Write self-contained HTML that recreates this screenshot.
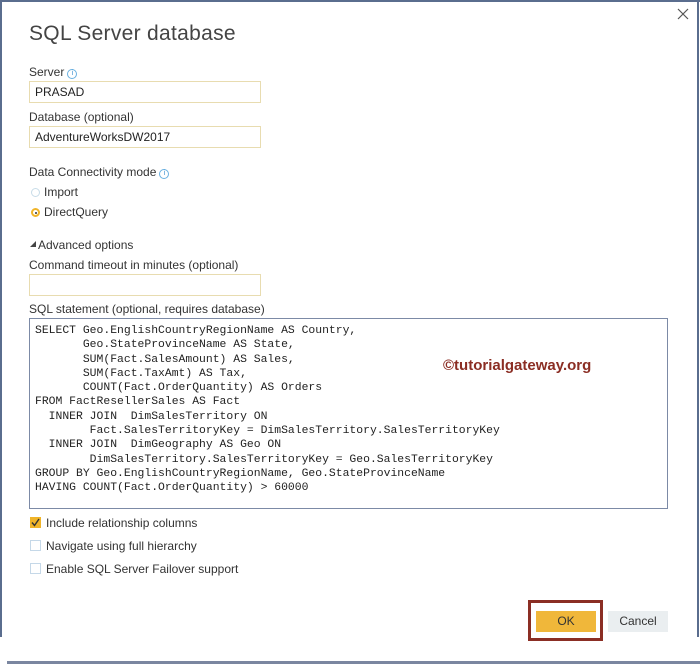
<!DOCTYPE html>
<html><head><meta charset="utf-8">
<style>
*{margin:0;padding:0;box-sizing:border-box}
html,body{width:700px;height:664px;background:#fff;overflow:hidden}
body{position:relative;font-family:"Liberation Sans",sans-serif;color:#333;font-size:12px}
.a{position:absolute;white-space:nowrap}
.lbl{font-size:12px;color:#333}
.inp{position:absolute;border:1px solid #e8dcb0;background:#fff;height:22px;font-size:12px;color:#222;padding:3px 0 0 5px}
.info{display:inline-block;width:10px;height:10px;border:1px solid #6ab0e0;border-radius:50%;font-size:7px;color:#3a8fd0;text-align:center;line-height:8px;vertical-align:1px;margin-left:3px}
.cb{position:absolute;width:11px;height:11px;border:1px solid #c5d8e8;background:#fff}
pre{font-family:"Liberation Mono",monospace;font-size:11.4px;line-height:14.3px;color:#222}
</style></head><body>
<div class="a" style="left:0;top:0;width:700px;height:2px;background:#5a6d8e"></div>
<div class="a" style="left:0;top:0;width:2px;height:637px;background:#5a6d8e"></div>
<div class="a" style="left:697px;top:0;width:2px;height:637px;background:#5a6d8e"></div>
<div class="a" style="left:7px;top:661px;width:693px;height:3px;background:#7a86a0"></div>
<svg class="a" style="left:677px;top:8px" width="12" height="12"><path d="M1 1L11 11M11 1L1 11" stroke="#555" stroke-width="1.2"/></svg>

<div class="a" style="left:29px;top:22px;font-size:21px;color:#444;letter-spacing:0.3px">SQL Server database</div>

<div class="a lbl" style="left:29px;top:65px">Server<span class="info">i</span></div>
<div class="inp" style="left:29px;top:81px;width:232px">PRASAD</div>
<div class="a lbl" style="left:29px;top:110px">Database (optional)</div>
<div class="inp" style="left:29px;top:126px;width:232px">AdventureWorksDW2017</div>

<div class="a lbl" style="left:29px;top:165px">Data Connectivity mode<span class="info">i</span></div>
<div class="a" style="left:31px;top:188px;width:9px;height:9px;border:1px solid #c8dce8;border-radius:50%"></div>
<div class="a lbl" style="left:44px;top:185px">Import</div>
<div class="a" style="left:31px;top:208px;width:9px;height:9px;border:2px solid #f0b429;border-radius:50%;background:#fff"><div style="position:absolute;left:1.5px;top:1.5px;width:2px;height:2px;background:#333;border-radius:50%"></div></div>
<div class="a lbl" style="left:44px;top:205px">DirectQuery</div>

<svg class="a" style="left:30px;top:241px" width="6" height="6"><path d="M0 6L6 0L6 6Z" fill="#444"/></svg>
<div class="a lbl" style="left:38px;top:238px">Advanced options</div>
<div class="a lbl" style="left:29px;top:258px">Command timeout in minutes (optional)</div>
<div class="inp" style="left:29px;top:274px;width:232px"></div>
<div class="a lbl" style="left:29px;top:302px">SQL statement (optional, requires database)</div>

<div class="a" style="left:29px;top:318px;width:639px;height:191px;border:1px solid #7c8aa6;background:#fff">
<pre style="position:absolute;left:5px;top:5px">SELECT Geo.EnglishCountryRegionName AS Country,
       Geo.StateProvinceName AS State,
       SUM(Fact.SalesAmount) AS Sales,
       SUM(Fact.TaxAmt) AS Tax,
       COUNT(Fact.OrderQuantity) AS Orders
FROM FactResellerSales AS Fact
  INNER JOIN  DimSalesTerritory ON
        Fact.SalesTerritoryKey = DimSalesTerritory.SalesTerritoryKey
  INNER JOIN  DimGeography AS Geo ON
        DimSalesTerritory.SalesTerritoryKey = Geo.SalesTerritoryKey
GROUP BY Geo.EnglishCountryRegionName, Geo.StateProvinceName
HAVING COUNT(Fact.OrderQuantity) &gt; 60000</pre>
<div style="position:absolute;left:413px;top:38px;font-weight:bold;font-size:15px;color:#8b2e24">©tutorialgateway.org</div>
</div>

<div class="cb" style="left:30px;top:517px;background:#f0b429;border-color:#f0b429"><svg width="9" height="9" style="position:absolute;left:0;top:0"><path d="M1 4.5L3.5 7.5L8 1" stroke="#333" stroke-width="1.4" fill="none"/></svg></div>
<div class="a lbl" style="left:46px;top:516px">Include relationship columns</div>
<div class="cb" style="left:30px;top:540px"></div>
<div class="a lbl" style="left:46px;top:539px">Navigate using full hierarchy</div>
<div class="cb" style="left:30px;top:563px"></div>
<div class="a lbl" style="left:46px;top:562px">Enable SQL Server Failover support</div>

<div class="a" style="left:528px;top:600px;width:75px;height:41px;border:3px solid #8b2e24"></div>
<div class="a" style="left:536px;top:611px;width:60px;height:21px;background:#f0b73a;text-align:center;line-height:21px;font-size:12px;color:#333">OK</div>
<div class="a" style="left:608px;top:611px;width:60px;height:21px;background:#eaeef0;text-align:center;line-height:21px;font-size:12px;color:#333">Cancel</div>
</body></html>
